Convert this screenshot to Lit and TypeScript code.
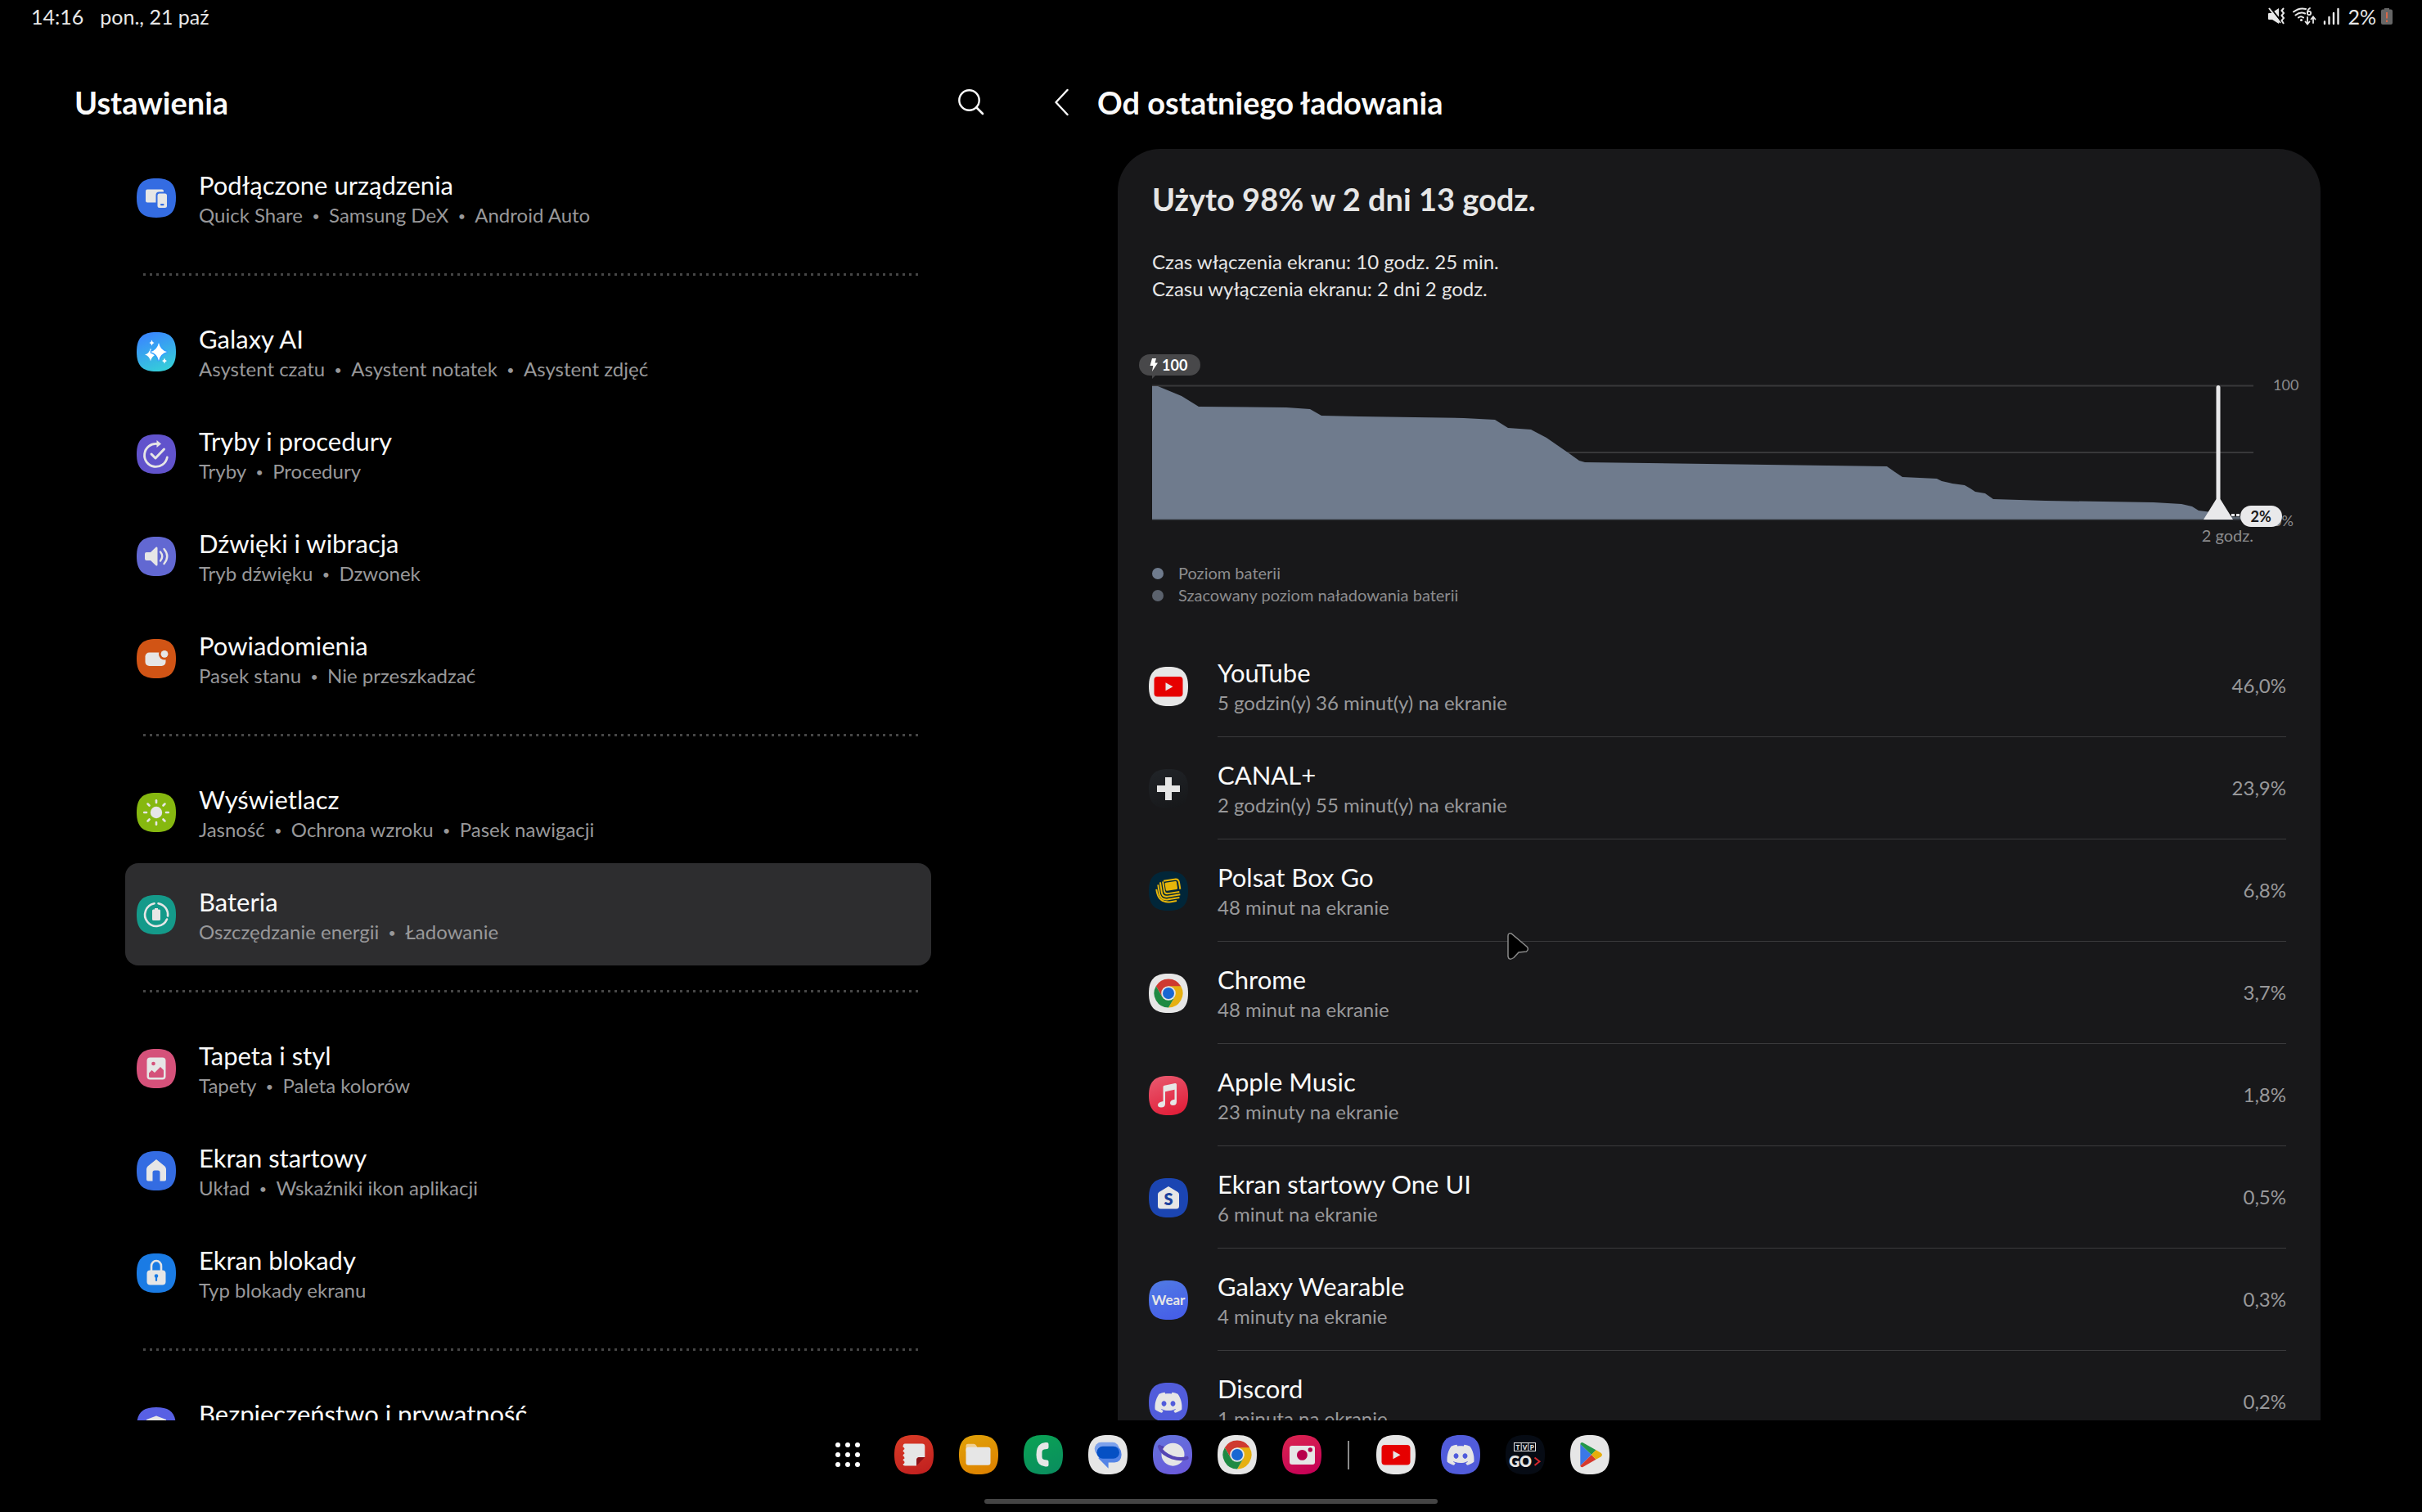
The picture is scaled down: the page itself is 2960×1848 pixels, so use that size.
import { LitElement, html, svg, css, nothing, type SVGTemplateResult } from "lit";
import { customElement, property } from "lit/decorators.js";
import { classMap } from "lit/directives/class-map.js";

const SQUIRCLE = "M24 0C41 0 48 7 48 24S41 48 24 48 0 41 0 24 7 0 24 0Z";
const DISCORD =
  "M20.317 4.3698a19.7913 19.7913 0 00-4.8851-1.5152.0741.0741 0 00-.0785.0371c-.211.3753-.4447.8648-.6083 1.2495-1.8447-.2762-3.68-.2762-5.4868 0-.1636-.3933-.4058-.8742-.6177-1.2495a.077.077 0 00-.0785-.037 19.7363 19.7363 0 00-4.8852 1.515.0699.0699 0 00-.0321.0277C.5334 9.0458-.319 13.5799.0992 18.0578a.0824.0824 0 00.0312.0561c2.0528 1.5076 4.0413 2.4228 5.9929 3.0294a.0777.0777 0 00.0842-.0276c.4616-.6304.8731-1.2952 1.226-1.9942a.076.076 0 00-.0416-.1057c-.6528-.2476-1.2743-.5495-1.8722-.8923a.077.077 0 01-.0076-.1277c.1258-.0943.2517-.1923.3718-.2914a.0743.0743 0 01.0776-.0105c3.9278 1.7933 8.18 1.7933 12.0614 0a.0739.0739 0 01.0785.0095c.1202.099.246.1981.3728.2924a.077.077 0 01-.0066.1276 12.2986 12.2986 0 01-1.873.8914.0766.0766 0 00-.0407.1067c.3604.698.7719 1.3628 1.225 1.9932a.076.076 0 00.0842.0286c1.961-.6067 3.9495-1.5219 6.0023-3.0294a.077.077 0 00.0313-.0552c.5004-5.177-.8382-9.6739-3.5485-13.6604a.061.061 0 00-.0312-.0286zM8.02 15.3312c-1.1825 0-2.1569-1.0857-2.1569-2.419 0-1.3332.9555-2.4189 2.157-2.4189 1.2108 0 2.1757 1.0952 2.1568 2.419 0 1.3332-.9555 2.4189-2.1569 2.4189zm7.9748 0c-1.1825 0-2.1569-1.0857-2.1569-2.419 0-1.3332.9554-2.4189 2.1569-2.4189 1.2108 0 2.1757 1.0952 2.1568 2.419 0 1.3332-.946 2.4189-2.1568 2.4189Z";
const W = "#e6e6e6";

const star = (x: number, y: number, rx: number, ry: number) =>
  svg`<path fill="#fff" d="M${x} ${y - ry}Q${x + rx * 0.2} ${y - ry * 0.2} ${x + rx} ${y}Q${x + rx * 0.2} ${y + ry * 0.2} ${x} ${y + ry}Q${x - rx * 0.2} ${y + ry * 0.2} ${x - rx} ${y}Q${x - rx * 0.2} ${y - ry * 0.2} ${x} ${y - ry}Z"/>`;

interface IconDef {
  from: string;
  to?: string;
  art: SVGTemplateResult;
}

const ICONS: Record<string, IconDef> = {
  devices: {
    from: "#346ce2",
    art: svg`<rect x="11" y="13.5" width="22" height="16" rx="2" fill="${W}"/>
      <rect x="23.5" y="16.5" width="15" height="21.5" rx="4" fill="#346ce2"/>
      <rect x="25.5" y="18.5" width="11.5" height="17.5" rx="2.5" fill="${W}"/>
      <rect x="29" y="31" width="4.5" height="2.2" rx="1" fill="#346ce2"/>`,
  },
  ai: {
    from: "#3a86ff",
    to: "#35d0d8",
    art: svg`${star(17, 27.5, 7, 8)}
      <path d="M27 13Q29 22 37 24Q29 26 27 35Q25 26 17 24Q25 22 27 13Z" fill="#fff" stroke="#32a0ff" stroke-width="3" paint-order="stroke"/>
      ${star(18.5, 13, 3, 3.6)}${star(34, 35, 3, 3.6)}`,
  },
  modes: {
    from: "#6153cc",
    art: svg`<path d="M25 11.5A14 14 0 1 0 37.3 28" fill="none" stroke="${W}" stroke-width="2.8" stroke-linecap="round"/>
      <path d="M24.5 7L30 11.5L24.5 16Z" fill="${W}"/>
      <path d="M18 24L23 29L33.5 18" fill="none" stroke="${W}" stroke-width="3" stroke-linecap="round" stroke-linejoin="round"/>`,
  },
  sound: {
    from: "#6268d2",
    art: svg`<path d="M12 19H17L23.5 12.8Q25.5 11.6 25.5 14V34Q25.5 36.4 23.5 35.2L17 29H12Q10 29 10 27V21Q10 19 12 19Z" fill="${W}"/>
      <path d="M29 18.5Q33.5 24 29 29.5M33.5 15Q41 24 33.5 33" fill="none" stroke="${W}" stroke-width="2.4" stroke-linecap="round"/>`,
  },
  notifications: {
    from: "#d15415",
    art: svg`<rect x="10.5" y="16.5" width="25" height="16.5" rx="5" fill="${W}"/>
      <circle cx="34" cy="18.5" r="7" fill="#d15415"/><circle cx="34" cy="18.3" r="4.4" fill="${W}"/>`,
  },
  display: {
    from: "#86b810",
    art: svg`<circle cx="24" cy="24" r="7.2" fill="${W}"/>
      ${[0, 45, 90, 135, 180, 225, 270, 315].map(
        (a) => svg`<path d="M24 9.2V12" transform="rotate(${a} 24 24)" stroke="${W}" stroke-width="2.6" stroke-linecap="round"/>`
      )}`,
  },
  battery: {
    from: "#149a8a",
    art: svg`<path d="M26.5 10.2A14 14 0 0 1 38 25.5M37 29.5A14 14 0 1 1 21.5 10.2" fill="none" stroke="${W}" stroke-width="2.6" stroke-linecap="round"/>
      <path d="M22 16H26V17.5H27.5Q29 17.5 29 19V29.5Q29 31 27.5 31H20.5Q19 31 19 29.5V19Q19 17.5 20.5 17.5H22Z" fill="${W}"/>`,
  },
  wallpaper: {
    from: "#d5517a",
    art: svg`<rect x="12.5" y="10.5" width="23" height="27" rx="4" fill="${W}"/>
      <path d="M15 29.5L18.5 26L22 29L29 22L33 26V33.5Q33 35 31.5 35H16.5Q15 35 15 33.5Z" fill="#d5517a"/>
      <circle cx="20.5" cy="18" r="2.3" fill="#d5517a"/>`,
  },
  home: {
    from: "#346ce2",
    art: svg`<path d="M24 10L34.5 18.5Q36 20 36 22V34.5Q36 36.5 34 36.5H28.5V26Q28.5 23.5 26 23.5H22Q19.5 23.5 19.5 26V36.5H14Q12 36.5 12 34.5V22Q12 20 13.5 18.5Z" fill="${W}"/>`,
  },
  lock: {
    from: "#1a7be4",
    art: svg`<path d="M18 21V15.5A6 6.5 0 0 1 30 15.5V21" fill="none" stroke="${W}" stroke-width="2.6"/>
      <rect x="12.5" y="20.5" width="23" height="18" rx="4" fill="${W}"/>
      <circle cx="24" cy="27.5" r="2.3" fill="#1a7be4"/><path d="M24 28V33" stroke="#1a7be4" stroke-width="2.2" stroke-linecap="round"/>`,
  },
  shield: {
    from: "#5860e4",
    art: svg`<path d="M24 10.5L36 15V25Q35 34 24 39Q13 34 12 25V15Z" fill="${W}"/>`,
  },
  youtube: {
    from: W,
    art: svg`<rect x="6.5" y="12" width="35" height="24.5" rx="4" fill="#e60000"/><path d="M20.5 19.3L29.5 24.2L20.5 29.2Z" fill="${W}"/>`,
  },
  canal: {
    from: "#202327",
    to: "#17181a",
    art: svg`<path d="M20 10H28V20H38V28H28V38H20V28H10V20H20Z" fill="${W}"/>`,
  },
  polsat: {
    from: "#012639",
    art: svg`<g transform="rotate(-9 24 24)" fill="none" stroke="#e6b60a" stroke-width="2">
      <rect x="21" y="13.5" width="14.5" height="10" rx="1.5" fill="#e6b60a" stroke="none"/>
      <path d="M19 11.5V23Q19 27 23 27H37M20 11H35Q38.5 11.5 38.5 16V24"/>
      <path d="M15.7 12V25Q16 30.5 22 30.5H37.5"/>
      <path d="M12.6 14.5V26Q13.5 34 22 34H36"/>
      <path d="M9.8 19.5Q9 37.5 25 37.5H32"/></g>`,
  },
  chrome: {
    from: W,
    art: svg`<path d="M8.84 15.25A17.5 17.5 0 0 1 39.16 15.25L31.58 24L16.42 28.38Z" fill="#cf3a30"/>
      <path d="M39.16 15.25A17.5 17.5 0 0 1 24 41.5L31.58 28.38L24 15.25Z" fill="#e6b012"/>
      <path d="M24 41.5A17.5 17.5 0 0 1 8.84 15.25L16.42 28.38L31.58 28.38Z" fill="#1f8a43"/>
      <circle cx="24" cy="24" r="8.8" fill="${W}"/><circle cx="24" cy="24" r="7" fill="#1967d2"/>`,
  },
  music: {
    from: "#e8566c",
    to: "#e11d38",
    art: svg`<path d="M17.5 13.5Q17.5 12 19 11.7L32 9Q34 8.7 34 10.5V31.5Q34 36 29.5 36Q26 36 26 33Q26 29.5 31.5 28.7V16.8L20 19.2V34Q20 38.5 15 38.5Q11 38.5 11 35.5Q11 32 17.5 31Z" fill="${W}"/>`,
  },
  oneui: {
    from: "#1b45b2",
    art: svg`<path d="M24 10L35.5 17Q37 18 37 20V34Q37 37.5 33.5 37.5H14.5Q11 37.5 11 34V20Q11 18 12.5 17Z" fill="${W}"/>
      <text x="24" y="32.5" text-anchor="middle" font-family="Lato, sans-serif" font-size="20" font-weight="800" fill="#1c429e">S</text>`,
  },
  wear: {
    from: "#5079e4",
    to: "#455de8",
    art: svg`<text x="24" y="29.5" text-anchor="middle" font-family="Lato, sans-serif" font-size="17" font-weight="700" fill="${W}">Wear</text>`,
  },
  discord: {
    from: "#515cdb",
    art: svg`<path d="${DISCORD}" transform="translate(7.5 7.8) scale(1.375)" fill="${W}"/>`,
  },
  notes: {
    from: "#d83a26",
    to: "#c1201f",
    art: svg`<path d="M13 10.6H34Q37.3 10.6 37.3 14V27H31Q27 27 27 31V37.6H13Q10.5 37.5 10.5 35.5Q12.5 35 12.5 33.2Q12.5 31.5 10.5 31Q10.5 29 12.5 28.5Q12.5 26 10.5 25.5Q10.5 23.5 12.5 22.5Q12.5 20.5 10.5 20Q10.5 18 12.5 17Q12.5 15 10.5 14.5Q10.5 10.6 13 10.6Z" fill="${W}"/>
      <path d="M27 37.6V31Q27 27 31 27H37.3Z" fill="#8c1218"/>`,
  },
  files: {
    from: "#e0a008",
    to: "#de8200",
    art: svg`<path d="M8.5 13Q8.5 10.7 11 10.7H18Q20 10.7 21 12.5L23 16V20H8.5Z" fill="#f0cf92"/>
      <rect x="8.5" y="14.7" width="30" height="22" rx="3" fill="${W}"/>`,
  },
  phone: {
    from: "#0aa155",
    to: "#0a8e5e",
    art: svg`<path d="M26.5 9H28.5Q30.5 9 30.5 11V15Q30.5 16.8 28.5 17L25 17.5Q22.5 18 22.5 20.5V27Q22.5 29.5 25 30L28.5 30.5Q30.5 30.7 30.5 32.5V36.5Q30.5 38.5 28.5 38.5H26.5Q15.5 37.5 15.5 23.8Q15.5 10 26.5 9Z" fill="${W}"/>`,
  },
  messages: {
    from: W,
    art: svg`<rect x="7.7" y="8.8" width="30" height="16" rx="8" fill="#7da2ec"/>
      <path d="M17 14H32Q40.6 14 40.6 23.5T32 33.5H24.6V40.7L12.5 28.5Z" fill="#5484e6"/>
      <rect x="10.3" y="13.7" width="27.7" height="15" rx="7.5" fill="#0550c4"/>`,
  },
  internet: {
    from: "#6472dc",
    to: "#6a5adb",
    art: svg`<path d="M7 13Q10 12 15 15L12 21Q7 17 7 13Z" fill="#4f3fae"/>
      <circle cx="24.5" cy="23.7" r="14" fill="${W}"/>
      <path d="M8 14Q11 23 24 27.5Q34 30.5 41.5 28" fill="none" stroke="#5646b4" stroke-width="4.2" stroke-linecap="round"/>`,
  },
  camera: {
    from: "#d92250",
    to: "#c50056",
    art: svg`<rect x="9" y="13" width="31" height="23" rx="3" fill="${W}"/><circle cx="24.4" cy="24.4" r="6.4" fill="#b8004c"/><circle cx="34.3" cy="18" r="2.7" fill="#b8004c"/>`,
  },
  tvp: {
    from: "#060b14",
    art: svg`<rect x="10.5" y="9.5" width="26" height="10" fill="none" stroke="${W}" stroke-width="1"/><path d="M19.2 9.5V19.5M27.8 9.5V19.5" stroke="${W}" stroke-width="1"/>
      <g font-family="Lato, sans-serif" font-weight="900" text-anchor="middle" fill="${W}" font-size="8"><text x="14.9" y="17.5">T</text><text x="23.5" y="17.5">V</text><text x="32.2" y="17.5">P</text>
      <text x="18" y="38.5" font-size="18" font-weight="800">GO</text></g><path d="M35.5 27.5L41.5 32.2L35.5 37" fill="none" stroke="#d8262c" stroke-width="2"/>`,
  },
  play: {
    from: W,
    art: svg`<path d="M12.3 11V37.5L26 24Z" fill="#3b78e7"/>
      <path d="M12.3 11Q12.8 8.5 15.5 9.2L31.5 18.3L26 24Z" fill="#23974a"/>
      <path d="M12.3 37.5Q12.8 39.8 15.5 39L31.5 29.8L26 24Z" fill="#d6392e"/>
      <path d="M31.5 18.3L37.5 21.7Q40.5 24 37.5 26.4L31.5 29.8L25.8 24Z" fill="#e6ad0c"/>`,
  },
};

@customElement("app-icon")
class AppIcon extends LitElement {
  @property() name = "";
  static styles = css`
    :host { display: block; width: 48px; height: 48px; flex: none; }
    .art { display: block; width: 100%; height: 100%; }
  `;
  render() {
    const icon = ICONS[this.name];
    if (!icon) return nothing;
    return html`<svg class="art" viewBox="0 0 48 48" aria-hidden="true">
      <defs><linearGradient id="g" x1="0.3" y1="0" x2="0.7" y2="1"><stop offset="0" stop-color="${icon.from}"/><stop offset="1" stop-color="${icon.to ?? icon.from}"/></linearGradient></defs>
      <path d="${SQUIRCLE}" fill="url(#g)"/>${icon.art}</svg>`;
  }
}

interface Setting {
  icon: string;
  name: string;
  parts: string[];
  selected?: boolean;
}

const GROUPS: Setting[][] = [
  [{ icon: "devices", name: "Podłączone urządzenia", parts: ["Quick Share", "Samsung DeX", "Android Auto"] }],
  [
    { icon: "ai", name: "Galaxy AI", parts: ["Asystent czatu", "Asystent notatek", "Asystent zdjęć"] },
    { icon: "modes", name: "Tryby i procedury", parts: ["Tryby", "Procedury"] },
    { icon: "sound", name: "Dźwięki i wibracja", parts: ["Tryb dźwięku", "Dzwonek"] },
    { icon: "notifications", name: "Powiadomienia", parts: ["Pasek stanu", "Nie przeszkadzać"] },
  ],
  [
    { icon: "display", name: "Wyświetlacz", parts: ["Jasność", "Ochrona wzroku", "Pasek nawigacji"] },
    { icon: "battery", name: "Bateria", parts: ["Oszczędzanie energii", "Ładowanie"], selected: true },
  ],
  [
    { icon: "wallpaper", name: "Tapeta i styl", parts: ["Tapety", "Paleta kolorów"] },
    { icon: "home", name: "Ekran startowy", parts: ["Układ", "Wskaźniki ikon aplikacji"] },
    { icon: "lock", name: "Ekran blokady", parts: ["Typ blokady ekranu"] },
  ],
  [{ icon: "shield", name: "Bezpieczeństwo i prywatność", parts: [] }],
];

const APPS = [
  { icon: "youtube", name: "YouTube", time: "5 godzin(y) 36 minut(y) na ekranie", share: "46,0%" },
  { icon: "canal", name: "CANAL+", time: "2 godzin(y) 55 minut(y) na ekranie", share: "23,9%" },
  { icon: "polsat", name: "Polsat Box Go", time: "48 minut na ekranie", share: "6,8%" },
  { icon: "chrome", name: "Chrome", time: "48 minut na ekranie", share: "3,7%" },
  { icon: "music", name: "Apple Music", time: "23 minuty na ekranie", share: "1,8%" },
  { icon: "oneui", name: "Ekran startowy One UI", time: "6 minut na ekranie", share: "0,5%" },
  { icon: "wear", name: "Galaxy Wearable", time: "4 minuty na ekranie", share: "0,3%" },
  { icon: "discord", name: "Discord", time: "1 minuta na ekranie", share: "0,2%" },
];

const PINNED = [
  ["notes", "Notes"], ["files", "Moje pliki"], ["phone", "Telefon"], ["messages", "Wiadomości"],
  ["internet", "Internet"], ["chrome", "Chrome"], ["camera", "Aparat"],
];
const RECENT = [["youtube", "YouTube"], ["discord", "Discord"], ["tvp", "TVP GO"], ["play", "Sklep Play"]];

/* Battery level outline: x along the time axis, y down from 100%. */
const LEVEL: [number, number][] = [
  [0, 1], [7, 1], [36, 13], [57, 26], [164, 27], [193, 29], [207, 37], [253, 38], [381, 40], [419, 42], [435, 52],
  [463, 54], [482, 64], [508, 82], [522, 92], [529, 94], [752, 97], [898, 99], [908, 106], [917, 112], [959, 114], [965, 117],
  [974, 119], [978, 120], [993, 122], [1000, 126], [1006, 130], [1018, 132], [1028, 139], [1092, 141], [1224, 143], [1258, 145],
  [1271, 148], [1279, 153], [1303, 156],
];

@customElement("battery-chart")
class BatteryChart extends LitElement {
  static styles = css`
    :host { display: block; }
    .chart { display: grid; grid-template-columns: minmax(0, 1fr) 31px; column-gap: 24px; font-size: 20px; line-height: 24px; color: #8c8c8e; }
    .plot { position: relative; height: 164px; }
    .area { display: block; width: 100%; height: 100%; overflow: visible; }
    .scale { display: flex; flex-direction: column; justify-content: space-between; margin: -13px 0; font-size: 18px; white-space: nowrap; }
    .hours { text-align: right; margin-top: 7px; }
    .badge { position: absolute; left: -16px; bottom: 100%; margin-bottom: 12px; display: flex; align-items: center; gap: 5px; height: 26px; padding: 0 11px 0 13px; border-radius: 13px; background: #48484a; color: #fff; font-weight: 700; font-size: 18px; }
    .tail { position: absolute; left: 16px; top: 25px; width: 5px; height: 5px; background: #48484a; clip-path: polygon(0 0, 100% 0, 0 100%); }
    .marker { position: absolute; left: 97%; top: 0; bottom: 0; width: 36px; margin-left: -21px; }
    .handle { display: block; width: 100%; height: 100%; }
    .now { position: absolute; left: 97%; margin-left: 24px; bottom: -9px; height: 26px; width: 51px; border-radius: 13px; background: #e9e9eb; color: #1a1a1c; font-weight: 700; font-size: 18px; text-align: center; line-height: 26px; }
  `;
  render() {
    const outline = LEVEL.map(([x, y]) => `L${x} ${y}`).join("");
    return html`<div class="chart">
      <div class="plot">
        <svg class="area" viewBox="0 0 1346 164" preserveAspectRatio="none" role="img" aria-label="Poziom baterii">
          <path d="M0 0.5H1346M0 82H1346" stroke="#38383a" stroke-width="2"/>
          <path d="M0 164${outline}V164Z" fill="#6f7b8d"/>
          <path d="M1303 162H1346" stroke="#59636f" stroke-width="3"/>
          <path d="M1319 158.5H1332" stroke="#e6e6e8" stroke-width="3" stroke-dasharray="4 2"/>
          <path d="M0 164H1346" stroke="#454b53" stroke-width="1"/>
        </svg>
        <div class="badge">
          <svg width="10" height="16" viewBox="0 0 10 16" aria-hidden="true"><path d="M3 0H8L6.5 5.5H10L3 16L4.3 9H0.5Z" fill="#fff"/></svg>100<span class="tail"></span>
        </div>
        <div class="marker"><svg class="handle" viewBox="0 0 36 164" aria-hidden="true"><path d="M15.5 2.5Q15.5 0 18 0T20.5 2.5V139L36 164H0L15.5 139Z" fill="#e9e9eb"/></svg></div>
        <div class="now">2%</div>
      </div>
      <div class="scale"><span>100</span><span>0%</span></div>
      <div class="hours">2 godz.</div>
    </div>`;
  }
}

@customElement("app-root")
class AppRoot extends LitElement {
  static styles = css`
    :host { display: flex; flex-direction: column; position: relative; height: 100vh; overflow: hidden; background: #000; color: #fafafa; font-family: Lato, Roboto, sans-serif; font-size: 24px; line-height: 30px; }
    ul { list-style: none; margin: 0; padding: 0; }
    svg { display: block; }
    button { border: 0; padding: 0; background: none; color: inherit; font: inherit; display: block; cursor: pointer; }
    a { color: inherit; text-decoration: none; }
    h1, h2, p { margin: 0; }
    .status { flex: none; height: 40px; padding: 0 36px 0 38px; display: flex; align-items: center; justify-content: space-between; font-size: 25px; line-height: 30px; color: #e8e8e8; }
    .clock { display: flex; gap: 20px; }
    .tray { display: flex; align-items: center; gap: 8px; }
    .level { margin: 0 -2px 0 2px; }
    .panes { flex: 1; min-height: 0; display: grid; grid-template-columns: minmax(0, 31fr) minmax(0, 43fr); grid-template-rows: minmax(0, 1fr); }
    .pane { display: flex; flex-direction: column; min-height: 0; overflow: hidden; }
    .head { flex: none; display: flex; align-items: center; height: 46px; padding: 62px 0 31px; }
    .menu-head { justify-content: space-between; padding-left: 91px; padding-right: 36px; }
    .detail-head { gap: 35px; padding-left: 48px; }
    .title { font-size: 38px; line-height: 46px; font-weight: 700; }
    .scroll { flex: 1; min-height: 0; overflow: hidden; }
    .menu { padding: 0 102px 0 153px; }
    .divider { height: 3px; margin: 30px 14px 30px 22px; background: repeating-linear-gradient(90deg, #464646 0 3px, transparent 3px 8px); }
    .setting { display: flex; align-items: center; gap: 28px; height: 125px; padding: 0 14px; border-radius: 16px; }
    .selected { background: #2d2d2f; }
    .name { font-size: 31px; line-height: 40px; }
    .sub { margin-top: 2px; min-height: 30px; color: #98989a; white-space: nowrap; }
    .dot { display: inline-block; width: 32px; text-align: center; font-size: 16px; vertical-align: 2px; line-height: 16px; }
    .card { margin: 3px 124px 0 126px; border-radius: 52px 52px 0 0; background: #18181a; padding-top: 38px; }
    .summary { padding: 0 42px; color: #e6e6e6; }
    .used { font-size: 38px; line-height: 46px; font-weight: 700; }
    .times { margin-top: 37px; line-height: 33px; }
    .chart { margin: 102px 27px 0 42px; }
    .legend { margin-top: 21px; padding: 0 42px; font-size: 20px; line-height: 27px; color: #8c8c8e; }
    .key { display: flex; align-items: center; gap: 18px; }
    .swatch { width: 14px; height: 14px; border-radius: 50%; background: #6f7b8d; }
    .estimate { background: #5b626d; }
    .apps { margin-top: 35px; padding: 0 42px 0 38px; }
    .app { display: flex; align-items: center; gap: 36px; height: 125px; }
    .info { flex: 1; height: 124px; display: flex; align-items: center; justify-content: space-between; border-bottom: 1px solid #3a3a3c; }
    .share { color: #98989a; }
    .dock { flex: none; height: 94px; padding-top: 18px; display: flex; flex-direction: column; align-items: center; gap: 30px; }
    .shelf { display: flex; align-items: center; gap: 31px; }
    .drawer { padding: 0 11px 0 28px; }
    .rule { width: 2px; height: 35px; margin: 0 2px 0 1px; background: #8a8a8a; }
    .gesture { width: 554px; height: 6px; border-radius: 3px; background: #444; }
    .cursor { position: absolute; left: 1841px; top: 1139px; pointer-events: none; }
  `;

  private setting(s: Setting) {
    return html`<li><a class=${classMap({ setting: true, selected: !!s.selected })} href="#${s.icon}">
      <app-icon name=${s.icon}></app-icon>
      <div><div class="name">${s.name}</div><div class="sub">${s.parts.map((p, i) => html`${i ? html`<span class="dot">•</span>` : nothing}${p}`)}</div></div>
    </a></li>`;
  }

  private shortcut([icon, label]: string[]) {
    return html`<button aria-label=${label}><app-icon name=${icon}></app-icon></button>`;
  }

  render() {
    return html`
      <header class="status">
        <div class="clock"><span>14:16</span><span>pon., 21 paź</span></div>
        <div class="tray">
          <svg width="22" height="22" viewBox="0 0 22 22" aria-hidden="true"><path d="M2 7H5L14 1V20L6 15H2Q1 15 1 14V8Q1 7 2 7Z" fill="#e8e8e8"/><path d="M3 0L17 17" stroke="#000" stroke-width="2"/><path d="M2 1L16 19" stroke="#e8e8e8" stroke-width="2"/><path d="M20 1L17.5 4L20 7L17.5 10L20 13L17.5 16L20 20" fill="none" stroke="#e8e8e8" stroke-width="2"/></svg>
          <svg width="30" height="22" viewBox="0 0 30 22" aria-hidden="true"><g fill="none" stroke="#e8e8e8" stroke-width="2" stroke-linecap="round"><path d="M2 5.5Q9 0 17 2M4.5 9.5Q10 5 16 7.5M8 12.5Q11 10 14 12.5"/><circle cx="21" cy="7" r="2.2" stroke-width="1.8"/><path d="M22 1Q19 2.5 19 6.5" stroke-width="1.8"/><path d="M19 12V20M16.5 17.5L19 20.5L21.5 17.5M26 19V12M23.5 14.5L26 11.5L28.5 14.5" stroke-width="1.8"/></g><circle cx="11.5" cy="15.5" r="1.6" fill="#e8e8e8"/></svg>
          <svg width="20" height="22" viewBox="0 0 20 22" aria-hidden="true"><path d="M2 17.5V20M7.5 12V20M13 7V20M18.5 2V20" stroke="#e8e8e8" stroke-width="2.4" stroke-linecap="round"/></svg>
          <span class="level">2%</span>
          <svg width="14" height="20" viewBox="0 0 14 20" aria-hidden="true"><path d="M4 0H10V1.5H12Q14 1.5 14 3.5V18Q14 20 12 20H2Q0 20 0 18V3.5Q0 1.5 2 1.5H4Z" fill="#666"/><path d="M7 5V12.5M7 14.5V17" stroke="#d8694a" stroke-width="2"/></svg>
        </div>
      </header>
      <main class="panes">
        <section class="pane">
          <div class="head menu-head"><h1 class="title">Ustawienia</h1>
            <button aria-label="Szukaj"><svg width="34" height="34" viewBox="0 0 34 34"><circle cx="14.5" cy="14.5" r="12.2" fill="none" stroke="#fafafa" stroke-width="2.4"/><path d="M23.5 23.5L31 31" stroke="#fafafa" stroke-width="2.6" stroke-linecap="round"/></svg></button>
          </div>
          <nav class="scroll menu">${GROUPS.map((g, i) => html`${i ? html`<div class="divider"></div>` : nothing}<ul>${g.map((s) => this.setting(s))}</ul>`)}</nav>
        </section>
        <section class="pane">
          <div class="head detail-head">
            <button aria-label="Wstecz"><svg width="18" height="34" viewBox="0 0 18 34"><path d="M16.5 2L2.5 17L16.5 32" fill="none" stroke="#fafafa" stroke-width="2.4" stroke-linecap="round" stroke-linejoin="round"/></svg></button>
            <h1 class="title">Od ostatniego ładowania</h1>
          </div>
          <div class="scroll">
            <div class="card">
              <div class="summary"><h2 class="used">Użyto 98% w 2 dni 13 godz.</h2>
                <div class="times"><p>Czas włączenia ekranu: 10 godz. 25 min.</p><p>Czasu wyłączenia ekranu: 2 dni 2 godz.</p></div></div>
              <battery-chart class="chart"></battery-chart>
              <ul class="legend">
                <li class="key"><span class="swatch"></span>Poziom baterii</li>
                <li class="key"><span class="swatch estimate"></span>Szacowany poziom naładowania baterii</li>
              </ul>
              <ul class="apps">${APPS.map((a) => html`<li class="app"><app-icon name=${a.icon}></app-icon>
                <div class="info"><div><div class="name">${a.name}</div><div class="sub">${a.time}</div></div><span class="share">${a.share}</span></div></li>`)}</ul>
            </div>
          </div>
        </section>
      </main>
      <footer class="dock">
        <div class="shelf">
          <button class="drawer" aria-label="Aplikacje"><svg width="30" height="30" viewBox="0 0 30 30">${[3, 15, 27].map((y) => [3, 15, 27].map((x) => svg`<circle cx="${x}" cy="${y}" r="3" fill="#fff"/>`))}</svg></button>
          ${PINNED.map((p) => this.shortcut(p))}<span class="rule"></span>${RECENT.map((p) => this.shortcut(p))}
        </div>
        <div class="gesture"></div>
      </footer>
      <svg class="cursor" width="30" height="36" viewBox="0 0 30 36" aria-hidden="true"><path d="M2 5Q2 1 6 2L25 18Q28 21 24.5 24L15 25L9 31.5Q3 35.5 2 30Z" fill="#000" stroke="#8a8a8a" stroke-width="1.5"/></svg>`;
  }
}
